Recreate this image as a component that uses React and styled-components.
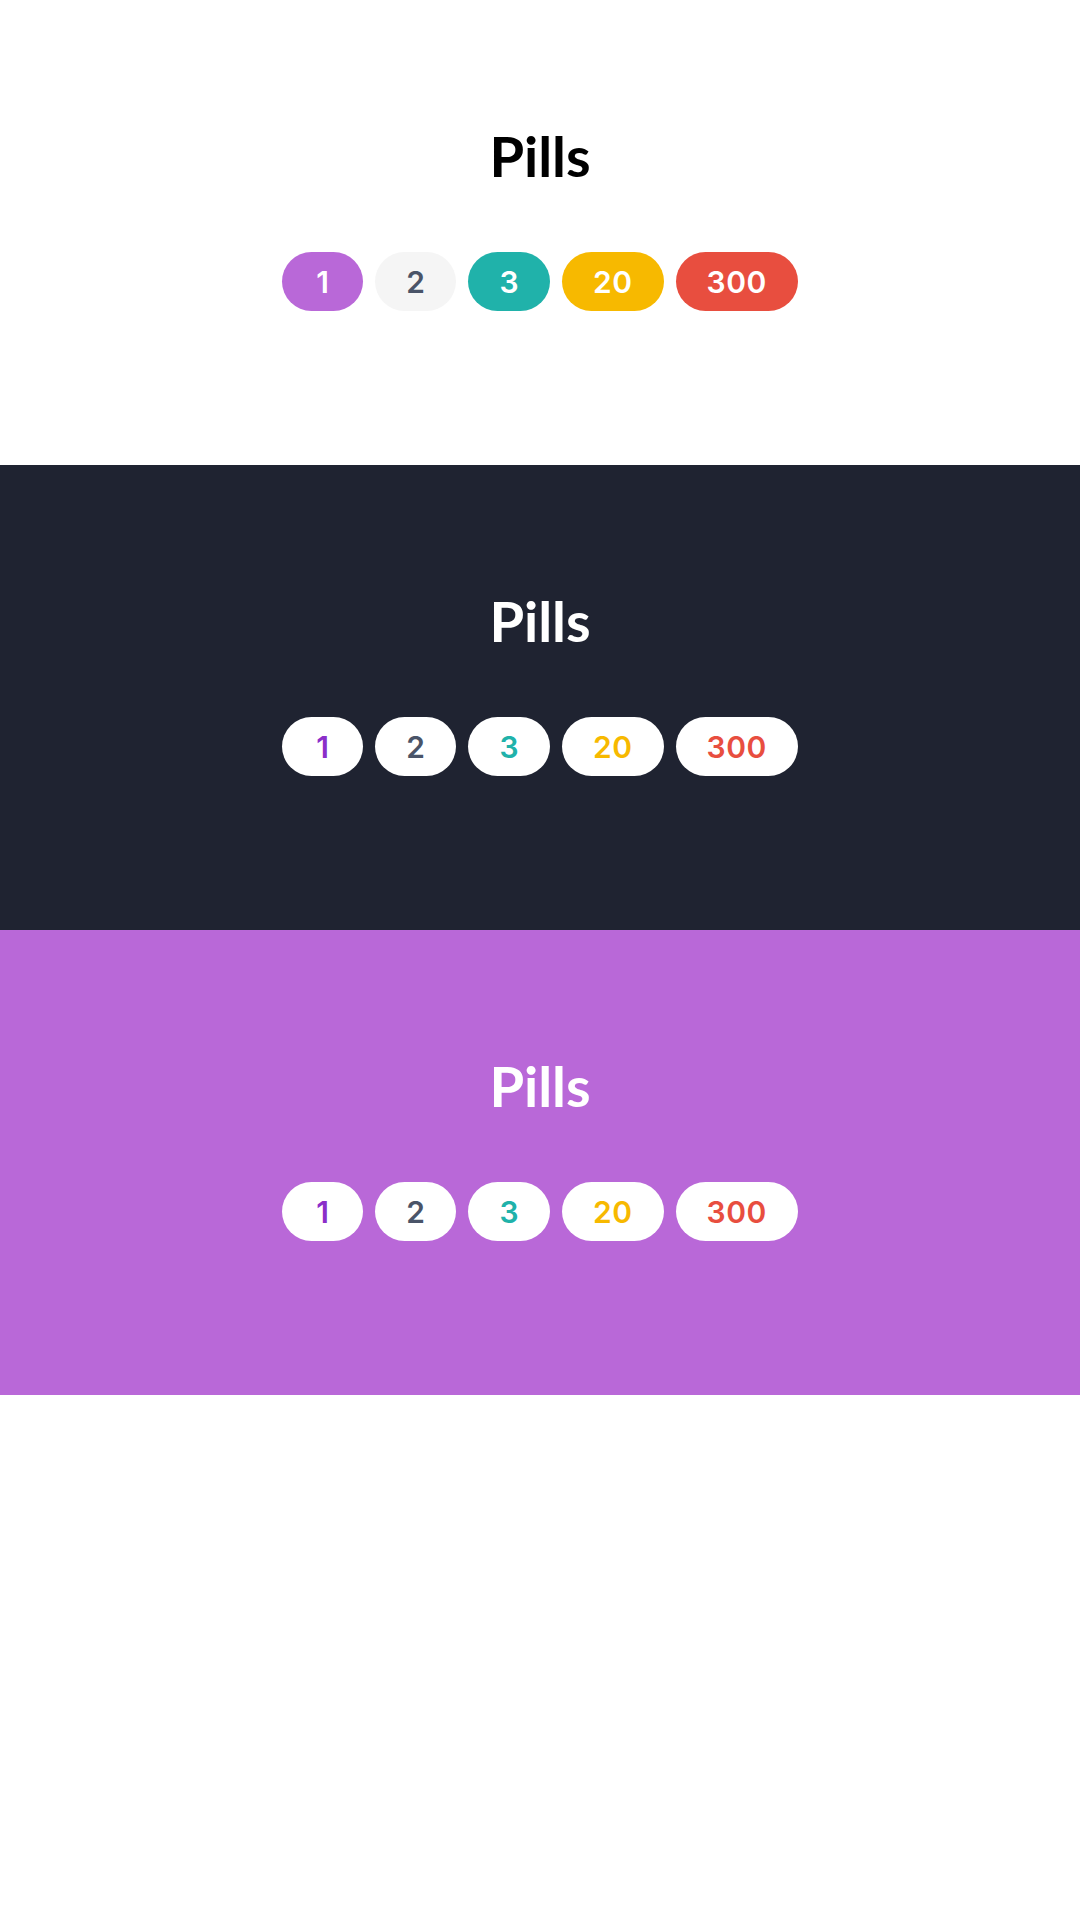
import React from "react";
import styled, { createGlobalStyle } from "styled-components";

const GlobalStyle = createGlobalStyle`
  body {
    margin: 0;
    background: #ffffff;
    font-family: Lato, "Open Sans", sans-serif;
  }
`;

const COLORS = {
  purple: "#b968d8",
  purpleDark: "#8b2fc9",
  grey: "#f5f5f5",
  slate: "#4a5468",
  teal: "#20b2aa",
  yellow: "#f7b900",
  red: "#e84e3f",
  navy: "#1f2331",
};

const Section = styled.section`
  height: 465px;
  box-sizing: border-box;
  padding-top: 128px;
  display: flex;
  flex-direction: column;
  align-items: center;
  background: ${(p) => p.bg};
`;

const Title = styled.h2`
  margin: 0;
  font-size: 56px;
  line-height: 1;
  font-weight: 700;
  color: ${(p) => p.color};
`;

const PillRow = styled.div`
  display: flex;
  gap: 12px;
  margin-top: 68px;
`;

const Pill = styled.span`
  display: inline-flex;
  align-items: center;
  justify-content: center;
  height: 59px;
  min-width: 81px;
  box-sizing: border-box;
  padding: 1px 31px 0;
  border-radius: 30px;
  font-family: Inter, "Open Sans", sans-serif;
  font-size: 30px;
  font-weight: 600;
  letter-spacing: 0.5px;
  background: ${(p) => p.bg};
  color: ${(p) => p.fg};
`;

const pills = [
  { label: "1", solid: COLORS.purple, text: "#ffffff", accent: COLORS.purpleDark },
  { label: "2", solid: COLORS.grey, text: COLORS.slate, accent: COLORS.slate },
  { label: "3", solid: COLORS.teal, text: "#ffffff", accent: COLORS.teal },
  { label: "20", solid: COLORS.yellow, text: "#ffffff", accent: COLORS.yellow },
  { label: "300", solid: COLORS.red, text: "#ffffff", accent: COLORS.red },
];

const PillSection = ({ bg, titleColor, inverted }) => (
  <Section bg={bg}>
    <Title color={titleColor}>Pills</Title>
    <PillRow>
      {pills.map((p) => (
        <Pill
          key={p.label}
          bg={inverted ? "#ffffff" : p.solid}
          fg={inverted ? p.accent : p.text}
        >
          {p.label}
        </Pill>
      ))}
    </PillRow>
  </Section>
);

export default function App() {
  return (
    <>
      <GlobalStyle />
      <PillSection bg="#ffffff" titleColor="#000000" />
      <PillSection bg={COLORS.navy} titleColor="#ffffff" inverted />
      <PillSection bg={COLORS.purple} titleColor="#ffffff" inverted />
    </>
  );
}
